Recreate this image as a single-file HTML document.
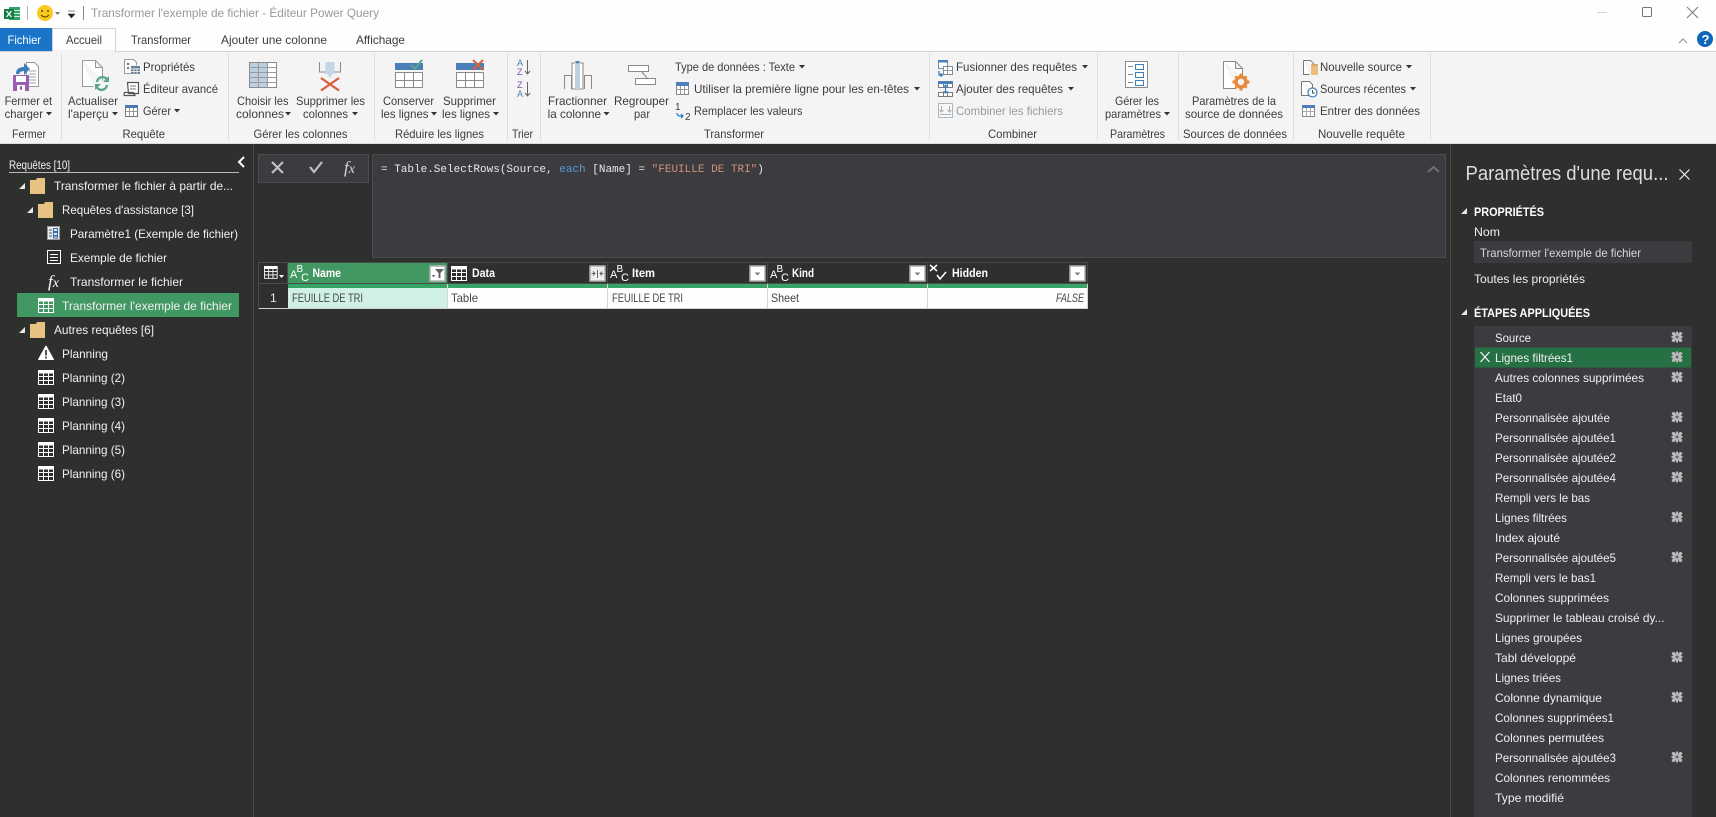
<!DOCTYPE html>
<html lang="fr"><head><meta charset="utf-8"><title>Transformer l'exemple de fichier - Éditeur Power Query</title>
<style>
html,body{margin:0;padding:0;background:#2e302e;overflow:hidden}
svg{display:block}
text{font-family:"Liberation Sans",sans-serif;font-size:12px;fill:#3c3c3c;white-space:pre}
.d text,text.d{fill:#f0f0f0}
.g{fill:#9a9a9a}
.m{font-family:"Liberation Mono",monospace;font-size:11px;fill:#e8e8e8}
.b{font-weight:bold;fill:#fff!important}
.c{fill:#464646!important}
</style></head><body>
<svg xmlns="http://www.w3.org/2000/svg" width="1716" height="817" viewBox="0 0 1716 817">
<defs>
<path id="ct" d="M0 0h6l-3 3.5z" fill="#333"/>
<g id="tb" fill="none" stroke="#fff"><rect x=".5" y=".5" width="15" height="14"/><path d="M0 2h16" stroke-width="3"/><path d="M.5 6.500h15M.5 10.500h15M5.500 3v12M10.500 3v12"/></g>
<path id="tri" d="M0 6L6 0V6z" fill="#e8e8e8"/>
<g id="fo"><path d="M0 2h6l1-2h8v16H0z" fill="#e8c283"/></g>
<g id="ge"><path d="M-4.500-5h2l1 1.500h3l1-1.500h2l1 2-1.500 1.500v3l1.500 1.500-1 2h-2l-1-1.500h-3l-1 1.500h-2l-1-2 1.500-1.500v-3l-1.500-1.500z" fill="#b8b8b8"/><path d="M-1-5.500h2v11h-2zM-5.500-1h11v2h-11z" fill="#b8b8b8"/><circle r="1.500" fill="#6a6a6a"/></g>
<g id="abc"><text x="0" y="13" style="font-size:11px;fill:#fff">A</text><text x="6.500" y="7" style="font-size:10px;fill:#fff">B</text><text x="11" y="16" style="font-size:11px;fill:#fff">C</text></g>
<g id="dd"><rect x="1" y="1" width="15" height="15" fill="#fff" stroke="#b0b0b0" stroke-width="1.500"/><path d="M5.500 7.500h6l-3 3z" fill="#808080"/></g>
</defs>

<rect width="1716" height="817" fill="#2e302e"/>
<!-- title bar -->
<rect width="1716" height="52" fill="#fefefe"/>
<rect x="9" y="7" width="11" height="13" fill="#33a468"/><path d="M14 10.500h6M14 13.500h6M14 16.500h6" stroke="#cfe8da"/>
<rect x="4" y="9" width="10" height="10" fill="#107c41"/><path d="M6.500 11l5 6M11.500 11l-5 6" stroke="#fff" stroke-width="1.300"/>
<rect x="27" y="6" width="1" height="14" fill="#b0b0b0"/>
<circle cx="45" cy="13" r="8" fill="#fbc91a"/><circle cx="42" cy="11" r="1" fill="#5a4a10"/><circle cx="48" cy="11" r="1" fill="#5a4a10"/><path d="M41 15q4 4 8 0" fill="none" stroke="#5a4a10"/>
<path d="M55 12h5l-2.500 3z" fill="#777"/>
<path d="M68 11h7M68 14h7l-3.500 4z" fill="#222" stroke="#222" stroke-width=".5"/>
<rect x="83" y="6" width="1" height="14" fill="#8a8a8a"/>
<text x="91" y="17" textLength="288" lengthAdjust="spacingAndGlyphs" style="fill:#999">Transformer l'exemple de fichier - Éditeur Power Query</text>
<path d="M1597 12.500h9.500" stroke="#d6d6d6"/>
<rect x="1642.500" y="7.500" width="9" height="9" rx="1" fill="none" stroke="#777"/>
<path d="M1687 7l11 11M1698 7l-11 11" stroke="#777"/>
<!-- tabs -->
<rect x="0" y="28" width="52.500" height="24" fill="#1a75c8"/>
<text x="7.500" y="44" textLength="33.500" lengthAdjust="spacingAndGlyphs" style="fill:#fff">Fichier</text>
<rect x="0" y="51" width="1716" height="1" fill="#d3d3d3"/>
<path d="M52.500 52V28.500H115.500V52" fill="#fefefe" stroke="#d3d3d3"/><rect x="53" y="50" width="62" height="3" fill="#f3f4f3"/>
<text x="66" y="44" textLength="36" lengthAdjust="spacingAndGlyphs">Accueil</text>
<text x="131" y="44" textLength="60" lengthAdjust="spacingAndGlyphs">Transformer</text>
<text x="221" y="44" textLength="106" lengthAdjust="spacingAndGlyphs">Ajouter une colonne</text>
<text x="356" y="44" textLength="49" lengthAdjust="spacingAndGlyphs">Affichage</text>
<path d="M1679 43l4-4 4 4" fill="none" stroke="#999" stroke-width="1.200"/>
<circle cx="1705" cy="39" r="8" fill="#0e66b8"/><text x="1701.500" y="44" class="b" style="font-size:13px">?</text>
<!-- ribbon -->
<rect y="52" width="1716" height="91" fill="#f3f4f3"/>
<rect y="143" width="1716" height="1" fill="#dcdcdc"/>
<path d="M61.500 54v86M228.500 54v86M374.500 54v86M507.500 54v86M540.500 54v86M929.500 54v86M1097.500 54v86M1178.500 54v86M1293.500 54v86M1430.500 54v86" stroke="#dcdddc"/>

<!-- Fermer -->
<path d="M26.500 62.500h8l4 4v20h-12z" fill="#fff" stroke="#9a9a9a"/><path d="M29 71h7M29 74h7M29 77h7M29 80h7M29 83h7" stroke="#9aa0a8"/>
<rect x="13" y="75" width="16" height="16" fill="#9a5fb5"/><rect x="16" y="76" width="10" height="6" fill="#fff"/><rect x="17" y="85" width="8" height="6" fill="#fff"/><rect x="20" y="86" width="2" height="4" fill="#9a5fb5"/>
<path d="M16 74q0-7 8-7V63l6 6-6 6v-4q-4 0-5 3z" fill="#3d7dbe"/>
<text x="4.600" y="105" textLength="47.400" lengthAdjust="spacingAndGlyphs">Fermer et</text>
<text x="4.600" y="118" textLength="38.400" lengthAdjust="spacingAndGlyphs">charger</text><use href="#ct" x="46" y="112"/>
<text x="12" y="138" textLength="34" lengthAdjust="spacingAndGlyphs">Fermer</text>

<!-- Requête -->
<path d="M82.500 60.500h13l7 7v13M95.500 60.500v7h7M82.500 60.500v26h11" fill="#fff" stroke="#9a9a9a"/>
<path d="M97 82a5.500 5.500 0 0 1 10-2.500M107 85a5.500 5.500 0 0 1-10 2.500" fill="none" stroke="#5ba58a" stroke-width="2.400"/><path d="M109 76v6h-6zM95 90v-6h6z" fill="#5ba58a"/>
<text x="68" y="105" textLength="50" lengthAdjust="spacingAndGlyphs">Actualiser</text>
<text x="68" y="118" textLength="40.500" lengthAdjust="spacingAndGlyphs">l'aperçu</text><use href="#ct" x="112" y="112"/>
<path d="M124.500 59.500h9l3 3v3M124.500 59.500v14h6" fill="#fff" stroke="#9a9a9a"/><rect x="127" y="63" width="2" height="2" fill="#7a7a7a"/><rect x="127" y="67" width="2" height="2" fill="#7a7a7a"/>
<rect x="131" y="66" width="9" height="8" fill="#6a7f95"/><path d="M131 69h9M131 71.500h9M134 68v6M137 68v6" stroke="#fff" stroke-width=".7"/>
<path d="M127.500 82.500h11v11h-10zM124.500 95.500h11q-2-1-2-3h-9q-1 3 0 3z" fill="#fff" stroke="#555" stroke-width="1.200"/><path d="M130 86h6M130 89h6" stroke="#777"/>
<rect x="125.500" y="105.500" width="12" height="11" fill="#fff" stroke="#777"/><rect x="125" y="105" width="13" height="3" fill="#4a7ab0"/><path d="M125.500 111.500h12M129.500 108v8M133.500 108v8" stroke="#999"/>
<text x="143" y="71" textLength="52" lengthAdjust="spacingAndGlyphs">Propriétés</text>
<text x="143" y="93" textLength="75" lengthAdjust="spacingAndGlyphs">Éditeur avancé</text>
<text x="143" y="115" textLength="28" lengthAdjust="spacingAndGlyphs">Gérer</text><use href="#ct" x="174" y="109"/>
<text x="122.500" y="138" textLength="42.500" lengthAdjust="spacingAndGlyphs">Requête</text>

<!-- colonnes -->
<rect x="249.500" y="62.500" width="27" height="25" fill="#fff" stroke="#8a8a8a"/><rect x="250" y="63" width="17" height="24" fill="#bcd0e2"/>
<path d="M249.500 67.500h27M249.500 72.500h27M249.500 77.500h27M249.500 82.500h27M258.500 63v25M267.500 63v25" stroke="#9a9a9a"/>
<text x="237" y="105" textLength="51.500" lengthAdjust="spacingAndGlyphs">Choisir les</text>
<text x="236" y="118" textLength="48" lengthAdjust="spacingAndGlyphs">colonnes</text><use href="#ct" x="285" y="112"/>
<path d="M319.500 62v10h6M340.500 62v10h-6" fill="none" stroke="#8a8a8a"/><rect x="325.500" y="62" width="9" height="12" fill="#c3d5e6"/><path d="M327 73h6l-3 5z" fill="#c3d5e6"/>
<path d="M321 78l18 12.500M339 78l-18 12.500" stroke="#d95b3c" stroke-width="2.200"/>
<text x="296" y="105" textLength="69" lengthAdjust="spacingAndGlyphs">Supprimer les</text>
<text x="303" y="118" textLength="45" lengthAdjust="spacingAndGlyphs">colonnes</text><use href="#ct" x="352" y="112"/>
<text x="253.500" y="138" textLength="94" lengthAdjust="spacingAndGlyphs">Gérer les colonnes</text>

<!-- lignes -->
<rect x="395" y="63" width="28" height="7" fill="#4a7fb8"/><rect x="395.500" y="72.500" width="27" height="15" fill="#fff" stroke="#8a8a8a"/><path d="M395.500 80.500h27M404.500 73v14M413.500 73v14" stroke="#8a8a8a"/>
<path d="M411 65l4 4 7-9" fill="none" stroke="#5ba58a" stroke-width="2.200"/>
<text x="383" y="105" textLength="51" lengthAdjust="spacingAndGlyphs">Conserver</text>
<text x="381" y="118" textLength="47.500" lengthAdjust="spacingAndGlyphs">les lignes</text><use href="#ct" x="431" y="112"/>
<rect x="456" y="63" width="28" height="7" fill="#4a7fb8"/><rect x="456.500" y="72.500" width="27" height="15" fill="#fff" stroke="#8a8a8a"/><path d="M456.500 80.500h27M465.500 73v14M474.500 73v14" stroke="#8a8a8a"/>
<path d="M473 60l10 10M483 60l-10 10" stroke="#d9603f" stroke-width="2"/>
<text x="443" y="105" textLength="53" lengthAdjust="spacingAndGlyphs">Supprimer</text>
<text x="442" y="118" textLength="48" lengthAdjust="spacingAndGlyphs">les lignes</text><use href="#ct" x="493" y="112"/>
<text x="395" y="138" textLength="89" lengthAdjust="spacingAndGlyphs">Réduire les lignes</text>

<!-- trier -->
<text x="517" y="66" style="font-size:9px;fill:#4a7fb8">A</text><text x="517" y="75" style="font-size:9px;fill:#7a4fa8">Z</text><path d="M527.500 60v13M525 71l2.500 3 2.500-3" fill="none" stroke="#666"/>
<text x="517" y="88" style="font-size:9px;fill:#7a4fa8">Z</text><text x="517" y="97" style="font-size:9px;fill:#4a7fb8">A</text><path d="M527.500 82v13M525 93l2.500 3 2.500-3" fill="none" stroke="#666"/>
<text x="512" y="138" textLength="21" lengthAdjust="spacingAndGlyphs">Trier</text>

<!-- transformer -->
<path d="M564.500 89V75.500h7V89M584.500 89V75.500h7V89" fill="none" stroke="#8a8a8a"/><rect x="572" y="63" width="11" height="26" fill="#fff" stroke="#8a8a8a"/><rect x="575" y="63" width="5" height="26" fill="#bcd0e2"/><path d="M575 61h5l-2.500 3z" fill="#4a7fb8"/>
<text x="548" y="105" textLength="59" lengthAdjust="spacingAndGlyphs">Fractionner</text>
<text x="547.600" y="118" textLength="53.400" lengthAdjust="spacingAndGlyphs">la colonne</text><use href="#ct" x="603.500" y="112"/>
<rect x="628.500" y="65.500" width="20" height="6" fill="#fff" stroke="#8a8a8a"/><rect x="635.500" y="78.500" width="20" height="6" fill="#fff" stroke="#8a8a8a"/><path d="M642 72l5 6" stroke="#8a8a8a"/>
<text x="614" y="105" textLength="55" lengthAdjust="spacingAndGlyphs">Regrouper</text>
<text x="634" y="118" textLength="16" lengthAdjust="spacingAndGlyphs">par</text>
<text x="675" y="71" textLength="120" lengthAdjust="spacingAndGlyphs">Type de données : Texte</text><use href="#ct" x="799" y="65"/>
<rect x="676.500" y="82.500" width="12" height="12" fill="#fff" stroke="#8a8a8a"/><rect x="676" y="82" width="13" height="4" fill="#4a7fb8"/><path d="M676.500 89.500h12M680.500 86v8M684.500 86v8" stroke="#999"/>
<text x="694" y="93" textLength="215" lengthAdjust="spacingAndGlyphs">Utiliser la première ligne pour les en-têtes</text><use href="#ct" x="914" y="87"/>
<text x="675" y="110" style="font-size:10px">1</text><text x="685" y="120" style="font-size:10px">2</text><path d="M677 113q0 3 3 3h3m-2-2l2 2-2 2" fill="none" stroke="#2f7ac0" stroke-width="1.300"/>
<text x="694" y="115" textLength="108.500" lengthAdjust="spacingAndGlyphs">Remplacer les valeurs</text>
<text x="704" y="138" textLength="60" lengthAdjust="spacingAndGlyphs">Transformer</text>

<!-- combiner -->
<rect x="938.500" y="60.500" width="9" height="8" fill="#fff" stroke="#7a8a9a"/><rect x="938" y="60" width="10" height="2.500" fill="#4a7fb8"/><rect x="943.500" y="66.500" width="9" height="8" fill="#fff" stroke="#7a8a9a"/><path d="M943.500 70.500h9M947.500 67v7" stroke="#999"/><path d="M939 71v4h3m-1.500-1.500l2 1.500-2 1.500" fill="none" stroke="#2f7ac0" stroke-width="1.200"/>
<text x="956" y="71" textLength="121" lengthAdjust="spacingAndGlyphs">Fusionner des requêtes</text><use href="#ct" x="1082" y="65"/>
<rect x="938" y="81" width="15" height="3" fill="#4a7fb8"/><path d="M938.500 84v3.500h14V84M943.500 84v3M947.500 84v3M938.500 92.500h14v4h-14zM943.500 92v5M947.500 92v5" fill="#fff" stroke="#7a7a7a"/><path d="M945.500 85v8M943.500 87l2-2 2 2M943.500 91l2 2 2-2" fill="none" stroke="#2f7ac0"/>
<text x="956" y="93" textLength="107" lengthAdjust="spacingAndGlyphs">Ajouter des requêtes</text><use href="#ct" x="1068" y="87"/>
<rect x="938.500" y="103.500" width="14" height="14" fill="#f6f7f6" stroke="#aab7c4"/><path d="M941.500 106v6M939.500 110l2 2 2-2M949.500 106v6M947.500 110l2 2 2-2M940 114.500h11" fill="none" stroke="#aab0b6"/>
<text x="956" y="115" textLength="107" lengthAdjust="spacingAndGlyphs" class="g">Combiner les fichiers</text>
<text x="988" y="138" textLength="49" lengthAdjust="spacingAndGlyphs">Combiner</text>

<!-- parametres -->
<rect x="1125.500" y="61.500" width="22" height="26" fill="#fff" stroke="#8a8a8a"/><path d="M1128 66.500h5M1128 74.500h5M1128 82.500h5" stroke="#8a8a8a"/><path d="M1135.500 64.500h8v5h-8zM1135.500 72.500h8v5h-8zM1135.500 80.500h8v5h-8z" fill="#fff" stroke="#3d7dbe"/>
<text x="1115" y="105" textLength="44" lengthAdjust="spacingAndGlyphs">Gérer les</text>
<text x="1105" y="118" textLength="56" lengthAdjust="spacingAndGlyphs">paramètres</text><use href="#ct" x="1164" y="112"/>
<text x="1110" y="138" textLength="55" lengthAdjust="spacingAndGlyphs">Paramètres</text>
<path d="M1223.500 61.500h12l7 7v8M1235.500 61.500v7h7M1223.500 61.500v27h13" fill="#fff" stroke="#8a8a8a"/>
<g transform="translate(1241 82)"><circle r="5" fill="none" stroke="#e8883a" stroke-width="3.500"/><path d="M-1.500-8.500h3v3h-3zM-1.500 5.500h3v3h-3zM-8.500-1.500h3v3h-3zM5.500-1.500h3v3h-3zM-6.500-5l1.500-1.500 2 2-1.500 1.500zM6.500-5l-1.500-1.500-2 2 1.500 1.500zM-6.500 5l1.500 1.500 2-2-1.500-1.500zM6.500 5l-1.500 1.500-2-2 1.500-1.500z" fill="#e8883a"/></g>
<text x="1192" y="105" textLength="84" lengthAdjust="spacingAndGlyphs">Paramètres de la</text>
<text x="1185" y="118" textLength="98" lengthAdjust="spacingAndGlyphs">source de données</text>
<text x="1183" y="138" textLength="104" lengthAdjust="spacingAndGlyphs">Sources de données</text>

<!-- nouvelle requete -->
<path d="M1303.500 60.500h7l3 3v2M1303.500 60.500v14h6" fill="#fff" stroke="#777"/><rect x="1311" y="66" width="7" height="9" rx="1" fill="#edbd7e"/><rect x="1311" y="64" width="7" height="2" rx="1" fill="#d8a565"/>
<text x="1320" y="71" textLength="82" lengthAdjust="spacingAndGlyphs">Nouvelle source</text><use href="#ct" x="1406" y="65"/>
<path d="M1301.500 81.500h8l3 3v4M1301.500 81.500v14h7" fill="#fff" stroke="#777"/><circle cx="1312.500" cy="92.500" r="4.500" fill="#fff" stroke="#3d7dbe" stroke-width="1.200"/><path d="M1312.500 90v3h2.500" fill="none" stroke="#555"/>
<text x="1320" y="93" textLength="86" lengthAdjust="spacingAndGlyphs">Sources récentes</text><use href="#ct" x="1410" y="87"/>
<rect x="1302.500" y="105.500" width="12" height="11" fill="#fff" stroke="#888"/><rect x="1302" y="105" width="13" height="3" fill="#4a7fb8"/><path d="M1302.500 111.500h12M1306.500 108v8M1310.500 108v8" stroke="#aaa"/>
<text x="1320" y="115" textLength="100" lengthAdjust="spacingAndGlyphs">Entrer des données</text>
<text x="1318" y="138" textLength="87" lengthAdjust="spacingAndGlyphs">Nouvelle requête</text>

<!-- panel lines -->
<rect x="253" y="144" width="1" height="673" fill="#4a4c4a"/>
<rect x="1450" y="144" width="1" height="673" fill="#4a4c4a"/>

<!-- left panel -->
<g class="d">
<text x="9" y="169" textLength="61" lengthAdjust="spacingAndGlyphs">Requêtes [10]</text>
<rect x="9" y="172" width="230" height="1" fill="#b8b8b8"/>
<path d="M244 157l-5 5 5 5" fill="none" stroke="#fff" stroke-width="2"/>
<use href="#tri" x="19" y="183"/><use href="#fo" x="30" y="178"/>
<text x="54" y="190" textLength="179" lengthAdjust="spacingAndGlyphs">Transformer le fichier à partir de...</text>
<use href="#tri" x="27" y="207"/><use href="#fo" x="38" y="202"/>
<text x="62" y="214" textLength="132" lengthAdjust="spacingAndGlyphs">Requêtes d'assistance [3]</text>
<rect x="47.500" y="226.500" width="12" height="13" fill="#e8eaec" stroke="#9a9a9a"/><path d="M49 230h3M49 233h3M49 236h3" stroke="#555"/><path d="M53.500 228.500h4v3h-4zM53.500 232.500h4v3h-4zM53.500 236h4v2h-4z" fill="none" stroke="#2f6db0"/>
<text x="70" y="238" textLength="168" lengthAdjust="spacingAndGlyphs">Paramètre1 (Exemple de fichier)</text>
<rect x="47.500" y="250.500" width="13" height="13" fill="none" stroke="#fff"/><path d="M50 254.500h8M50 257.500h8M50 260.500h8" stroke="#fff"/>
<text x="70" y="262" textLength="97" lengthAdjust="spacingAndGlyphs">Exemple de fichier</text>
<text x="48" y="287" style="font-family:'Liberation Serif',serif;font-style:italic;font-size:17px;fill:#fff">f<tspan style="font-size:14px">x</tspan></text>
<text x="70" y="286" textLength="113" lengthAdjust="spacingAndGlyphs">Transformer le fichier</text>
<rect x="17" y="293" width="222" height="24" fill="#429862"/>
<use href="#tb" x="38" y="298"/>
<text x="62" y="310" textLength="170" lengthAdjust="spacingAndGlyphs">Transformer l'exemple de fichier</text>
<use href="#tri" x="19" y="327"/><use href="#fo" x="30" y="322"/>
<text x="54" y="334" textLength="100" lengthAdjust="spacingAndGlyphs">Autres requêtes [6]</text>
<path d="M46 346l7.500 13.500h-15z" fill="#fff" stroke="#fff" stroke-linejoin="round"/><path d="M46 350v5.500M46 356.500v2" stroke="#2e302e" stroke-width="1.600"/>
<text x="62" y="358" textLength="46" lengthAdjust="spacingAndGlyphs">Planning</text>
<use href="#tb" x="38" y="370"/><text x="62" y="382" textLength="63" lengthAdjust="spacingAndGlyphs">Planning (2)</text>
<use href="#tb" x="38" y="394"/><text x="62" y="406" textLength="63" lengthAdjust="spacingAndGlyphs">Planning (3)</text>
<use href="#tb" x="38" y="418"/><text x="62" y="430" textLength="63" lengthAdjust="spacingAndGlyphs">Planning (4)</text>
<use href="#tb" x="38" y="442"/><text x="62" y="454" textLength="63" lengthAdjust="spacingAndGlyphs">Planning (5)</text>
<use href="#tb" x="38" y="466"/><text x="62" y="478" textLength="63" lengthAdjust="spacingAndGlyphs">Planning (6)</text>
</g>

<!-- formula bar -->
<rect x="258.500" y="154.500" width="110" height="28" fill="#3c3b40" stroke="#4c4c4e"/>
<path d="M272 162l11 11M283 162l-11 11" stroke="#c0c0c0" stroke-width="2.200"/>
<path d="M310 167l4 5 8-10" fill="none" stroke="#c0c0c0" stroke-width="2.200"/>
<text x="344" y="173" style="font-family:'Liberation Serif',serif;font-style:italic;font-size:17px;fill:#d8d8d8">f<tspan style="font-size:14px">x</tspan></text>
<rect x="372.500" y="154.500" width="1073" height="103" fill="#3c3b40" stroke="#4c4c4e"/>
<text x="381" y="172" class="m">= Table.SelectRows(Source, <tspan style="fill:#569cd6">each</tspan> [Name] = <tspan style="fill:#ce9178">"FEUILLE DE TRI"</tspan>)</text>
<path d="M1428 172l5.500-5 5.500 5" fill="none" stroke="#707070" stroke-width="2"/>

<!-- grid -->
<rect x="258" y="262" width="830" height="47" fill="#2e302e"/>
<rect x="288" y="263" width="160" height="21" fill="#429862"/>
<rect x="288" y="284" width="800" height="4" fill="#35a465"/>
<rect x="288" y="288" width="160" height="20" fill="#cff0e3"/>
<rect x="448" y="288" width="640" height="20" fill="#fdfefd"/>
<rect x="258" y="308" width="830" height="1" fill="#d4d4d4"/>
<path d="M258.500 262v47M258 262.500h830M287.500 262v22M447.500 262v22M607.500 262v22M767.500 262v22M927.500 262v22M1087.500 262v22M258 283.500h830" stroke="#4a4c4a" fill="none"/>
<path d="M447.500 284v24M607.500 284v24M767.500 284v24M927.500 284v24M1087.500 284v24" stroke="#d6d6d6"/>
<g transform="translate(264 266) scale(.85)"><use href="#tb"/></g><path d="M279 275h5l-2.500 3z" fill="#fff"/>
<use href="#abc" x="290" y="265"/><use href="#abc" x="610" y="265"/><use href="#abc" x="770" y="265"/>
<use href="#tb" x="451" y="266"/>
<path d="M930 265l7 6M937 265l-7 6" stroke="#fff" stroke-width="1.500"/><path d="M937 275l3 4 6-7" fill="none" stroke="#fff" stroke-width="1.500"/>
<text x="312.500" y="277" textLength="28.500" lengthAdjust="spacingAndGlyphs" class="b">Name</text>
<text x="472" y="277" textLength="23" lengthAdjust="spacingAndGlyphs" class="b">Data</text>
<text x="632" y="277" textLength="23" lengthAdjust="spacingAndGlyphs" class="b">Item</text>
<text x="792" y="277" textLength="22" lengthAdjust="spacingAndGlyphs" class="b">Kind</text>
<text x="952" y="277" textLength="36" lengthAdjust="spacingAndGlyphs" class="b">Hidden</text>
<g transform="translate(429 265)"><rect x="1" y="1" width="15" height="15" fill="#fff" stroke="#b0b0b0" stroke-width="1.500"/><path d="M6 4h9l-3.500 4v5h-2V8z" fill="#606060"/><path d="M2.500 10h4l-2 2.500z" fill="#777"/></g>
<g transform="translate(589 265)"><rect x="1" y="1" width="15" height="15" fill="#eee" stroke="#b0b0b0" stroke-width="1.500"/><path d="M2.500 8.500h3M4 6.500L6 8.500 4 10.500M14.500 8.500h-3M13 6.500L11 8.500 13 10.500M8.500 5v8" fill="none" stroke="#666"/></g>
<use href="#dd" x="749" y="265"/><use href="#dd" x="909" y="265"/><use href="#dd" x="1069" y="265"/>
<text x="270" y="302" style="fill:#e8e8e8">1</text>
<text x="292" y="302" textLength="71" lengthAdjust="spacingAndGlyphs" class="c">FEUILLE DE TRI</text>
<text x="451" y="302" textLength="27" lengthAdjust="spacingAndGlyphs" class="c">Table</text>
<text x="612" y="302" textLength="71" lengthAdjust="spacingAndGlyphs" class="c">FEUILLE DE TRI</text>
<text x="771" y="302" textLength="28" lengthAdjust="spacingAndGlyphs" class="c">Sheet</text>
<text x="1056" y="302" textLength="28" lengthAdjust="spacingAndGlyphs" class="c" style="font-style:italic">FALSE</text>

<!-- right panel -->
<g class="d">
<text x="1465.500" y="180" textLength="203" lengthAdjust="spacingAndGlyphs" style="font-size:20px;fill:#dcdcdc">Paramètres d'une requ...</text>
<path d="M1679.500 169.500l10 10M1689.500 169.500l-10 10" stroke="#f0f0f0" stroke-width="1.200"/>
<use href="#tri" x="1461" y="208"/>
<text x="1474" y="216" textLength="70" lengthAdjust="spacingAndGlyphs" class="b">PROPRIÉTÉS</text>
<text x="1474" y="236" textLength="26" lengthAdjust="spacingAndGlyphs">Nom</text>
<rect x="1474" y="241" width="218" height="22" fill="#3c3b40"/>
<text x="1480" y="257" textLength="161" lengthAdjust="spacingAndGlyphs" style="fill:#d8d8d8">Transformer l'exemple de fichier</text>
<text x="1474" y="283" textLength="111" lengthAdjust="spacingAndGlyphs">Toutes les propriétés</text>
<use href="#tri" x="1461" y="309"/>
<text x="1474" y="317" textLength="116" lengthAdjust="spacingAndGlyphs" class="b">ÉTAPES APPLIQUÉES</text>
<rect x="1474" y="326" width="218" height="491" fill="#3c3b40"/>
<rect x="1475" y="347.500" width="216" height="20" fill="#267144"/>
<path d="M1480.500 352l9 10M1489.500 352l-9 10" stroke="#f0f0f0" stroke-width="1.300"/>
<text x="1495" y="342" textLength="36" lengthAdjust="spacingAndGlyphs">Source</text>
<text x="1495" y="362" textLength="78" lengthAdjust="spacingAndGlyphs">Lignes filtrées1</text>
<text x="1495" y="382" textLength="149" lengthAdjust="spacingAndGlyphs">Autres colonnes supprimées</text>
<text x="1495" y="402" textLength="27" lengthAdjust="spacingAndGlyphs">Etat0</text>
<text x="1495" y="422" textLength="115" lengthAdjust="spacingAndGlyphs">Personnalisée ajoutée</text>
<text x="1495" y="442" textLength="121" lengthAdjust="spacingAndGlyphs">Personnalisée ajoutée1</text>
<text x="1495" y="462" textLength="121" lengthAdjust="spacingAndGlyphs">Personnalisée ajoutée2</text>
<text x="1495" y="482" textLength="121" lengthAdjust="spacingAndGlyphs">Personnalisée ajoutée4</text>
<text x="1495" y="502" textLength="95" lengthAdjust="spacingAndGlyphs">Rempli vers le bas</text>
<text x="1495" y="522" textLength="72" lengthAdjust="spacingAndGlyphs">Lignes filtrées</text>
<text x="1495" y="542" textLength="65" lengthAdjust="spacingAndGlyphs">Index ajouté</text>
<text x="1495" y="562" textLength="121" lengthAdjust="spacingAndGlyphs">Personnalisée ajoutée5</text>
<text x="1495" y="582" textLength="101" lengthAdjust="spacingAndGlyphs">Rempli vers le bas1</text>
<text x="1495" y="602" textLength="114" lengthAdjust="spacingAndGlyphs">Colonnes supprimées</text>
<text x="1495" y="622" textLength="169.500" lengthAdjust="spacingAndGlyphs">Supprimer le tableau croisé dy...</text>
<text x="1495" y="642" textLength="87" lengthAdjust="spacingAndGlyphs">Lignes groupées</text>
<text x="1495" y="662" textLength="81" lengthAdjust="spacingAndGlyphs">Tabl développé</text>
<text x="1495" y="682" textLength="66" lengthAdjust="spacingAndGlyphs">Lignes triées</text>
<text x="1495" y="702" textLength="107" lengthAdjust="spacingAndGlyphs">Colonne dynamique</text>
<text x="1495" y="722" textLength="119" lengthAdjust="spacingAndGlyphs">Colonnes supprimées1</text>
<text x="1495" y="742" textLength="109" lengthAdjust="spacingAndGlyphs">Colonnes permutées</text>
<text x="1495" y="762" textLength="121" lengthAdjust="spacingAndGlyphs">Personnalisée ajoutée3</text>
<text x="1495" y="782" textLength="115" lengthAdjust="spacingAndGlyphs">Colonnes renommées</text>
<text x="1495" y="802" textLength="69" lengthAdjust="spacingAndGlyphs">Type modifié</text>
</g>
<use href="#ge" x="1677" y="337"/>
<use href="#ge" x="1677" y="357"/>
<use href="#ge" x="1677" y="377"/>
<use href="#ge" x="1677" y="417"/>
<use href="#ge" x="1677" y="437"/>
<use href="#ge" x="1677" y="457"/>
<use href="#ge" x="1677" y="477"/>
<use href="#ge" x="1677" y="517"/>
<use href="#ge" x="1677" y="557"/>
<use href="#ge" x="1677" y="657"/>
<use href="#ge" x="1677" y="697"/>
<use href="#ge" x="1677" y="757"/>
</svg>
</body></html>
